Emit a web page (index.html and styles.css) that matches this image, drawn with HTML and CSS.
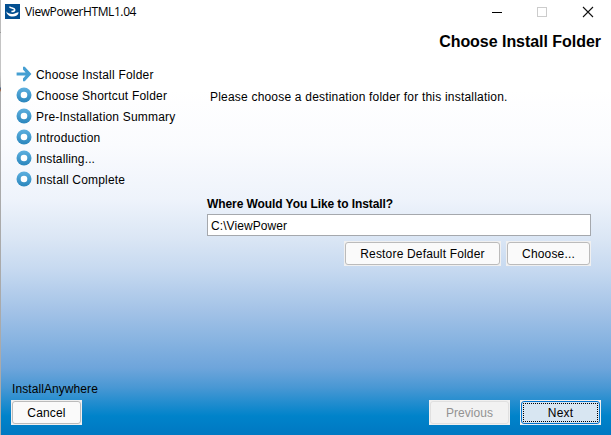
FILE: index.html
```html
<!DOCTYPE html>
<html lang="en">
<head>
<meta charset="utf-8">
<title>ViewPowerHTML1.04</title>
<link rel="stylesheet" href="styles.css">
</head>
<body>
<svg width="0" height="0" class="defs" aria-hidden="true">
  <defs>
    <linearGradient id="blue" x1="0" y1="0" x2="0" y2="1">
      <stop offset="0" stop-color="#5eb0df"/><stop offset="1" stop-color="#2a86bd"/>
    </linearGradient>
    <symbol id="ring" viewBox="0 0 16 16">
      <circle cx="8" cy="8" r="7.5" fill="url(#blue)"/><circle cx="8" cy="8" r="3.3" fill="#fff"/>
    </symbol>
    <symbol id="arrow" viewBox="0 0 16 16">
      <path d="M.6 6.6H9.6L7 3.6V.8H8.8L15.4 8L8.8 15.2H7V12.4L9.6 9.4H.6Z" fill="#459fd2"/>
    </symbol>
  </defs>
</svg>
<div class="window">
  <div class="edge"></div>
  <div class="body">
    <header class="titlebar">
      <svg class="app-icon" viewBox="0 0 15 15">
        <rect width="15" height="15" fill="#034f91"/>
        <path d="M4.6 2.6C5 4.4 9.7 3.6 9.7 5.7C9.7 6.9 8.4 7.5 6.4 7.5" fill="none" stroke="#fff" stroke-width="1.6"/>
        <path d="M1.3 7.2C2.3 9.2 5.5 10.2 8 9.9C10.4 9.7 11.4 8.2 13.7 8.2C13.2 11.2 10.7 12.7 7.7 12.6C4.2 12.5 1.5 10.3 1.3 7.2Z" fill="#fff"/>
      </svg>
      <span class="title">ViewPowerHTML1.04</span>
      <svg class="controls" width="102" height="12" viewBox="0 0 102 12" fill="none">
        <path d="M0 6.5H10" stroke="#000"/>
        <rect x="45.5" y="1.5" width="9" height="9" stroke="#ccc"/>
        <path d="M91 1L101 11M101 1L91 11" stroke="#111" stroke-width="1.1"/>
      </svg>
    </header>
    <h1 class="heading">Choose Install Folder</h1>
    <main class="content">
      <ul class="steps">
        <li><svg><use href="#arrow"/></svg><span>Choose Install Folder</span></li>
        <li><svg><use href="#ring"/></svg><span>Choose Shortcut Folder</span></li>
        <li><svg><use href="#ring"/></svg><span>Pre-Installation Summary</span></li>
        <li><svg><use href="#ring"/></svg><span class="tight">Introduction</span></li>
        <li><svg><use href="#ring"/></svg><span class="tight">Installing...</span></li>
        <li><svg><use href="#ring"/></svg><span>Install Complete</span></li>
      </ul>
      <section class="panel">
        <p class="message">Please choose a destination folder for this installation.</p>
        <label class="question" for="folder">Where Would You Like to Install?</label>
        <input class="folder" id="folder" type="text" value="C:\ViewPower">
        <div class="actions">
          <button class="restore"><span>Restore Default Folder</span></button>
          <button class="choose"><span>Choose...</span></button>
        </div>
      </section>
    </main>
    <footer class="footer">
      <p class="brand">InstallAnywhere</p>
      <div class="nav">
        <button class="cancel"><span>Cancel</span></button>
        <button class="previous" disabled><span>Previous</span></button>
        <button class="next"><span>Next</span></button>
      </div>
    </footer>
  </div>
</div>
</body>
</html>
```
FILE: styles.css
```css
* { box-sizing: border-box; }
body, p, h1, ul { margin: 0; padding: 0; }
body { overflow: hidden; font: 12px/14px "Liberation Sans", Arial, sans-serif; color: #000; }
.defs { position: absolute; }
.window { width: 611px; height: 435px; display: flex; }
.edge {
  width: 1px;
  background: linear-gradient(#bbb 32px, #999 32px 33px, #c4c4c4 33px 75px, #aaa 87px, #3c6796 88px, #a5603a 90px, #aaa 92px);
}
.body {
  width: 610px;
  display: flex; flex-direction: column;
  background: linear-gradient(#fff 90px, #fafbfe 145px, #eef3fb 200px, #dce7f5 236px, #c6d9f0 270px, #a4c3e7 310px, #6ea5db 368px, #4a98d4 387px, #0083ca 416px, #0078c2 435px);
}
.titlebar { height: 25px; display: flex; align-items: center; padding-left: 4px; }
.app-icon { width: 15px; height: 15px; margin-top: -2px; }
.title { margin: -2px 0 0 5px; font: 12px/16px "Open Sans", "Noto Sans", sans-serif; letter-spacing: -0.4px; }
.controls { margin-left: auto; margin-right: 17px; margin-top: -1px; }
.heading { height: 33px; padding: 7px 10px 0 0; text-align: right; font-size: 16px; line-height: 20px; letter-spacing: -.04px; }
.content { display: flex; flex: 1; padding-top: 6px; }
.steps { width: 206px; padding-left: 15px; list-style: none; letter-spacing: .2px; }
.steps li { height: 21px; display: flex; align-items: center; gap: 4px; }
.steps svg { width: 16px; height: 16px; margin-top: -2px; }
.steps .tight { letter-spacing: .13px; }
.panel { width: 384px; display: flex; flex-direction: column; padding-top: 26px; }
.message { padding-left: 3px; letter-spacing: .2px; }
.question { margin-top: 93px; font-weight: bold; letter-spacing: -.08px; }
.folder { width: 384px; height: 22px; margin-top: 3px; padding: 2px 3px 0; border: 1px solid #a5a8ad; background: #fff; font: inherit; letter-spacing: .08px; outline: 0; }
.actions { display: flex; justify-content: flex-end; gap: 5px; margin-top: 5px; }
button { height: 25px; padding: 1px; border: 0; background: #f0f0f0; color: #000; font: inherit; letter-spacing: .17px; }
button span { display: flex; align-items: center; justify-content: center; height: 23px; border: 1px solid #bbb; border-radius: 3px; background: #fafafa; }
.restore { width: 157px; }
.choose { width: 85px; }
.footer { padding: 0 10px 10px 10px; }
.brand { padding-left: 1px; margin-bottom: 4px; letter-spacing: .08px; }
.nav { display: flex; }
.cancel { width: 71px; }
.previous { width: 81px; margin-left: auto; color: #929292; letter-spacing: .05px; }
.previous span { border-color: #e0e0e0; background: #f2f2f2; }
.next { width: 81px; margin-left: 10px; }
.next span { border-color: #0073cf; background: #d8e6f2; outline: 1px dotted #000; outline-offset: -3px; }
```
